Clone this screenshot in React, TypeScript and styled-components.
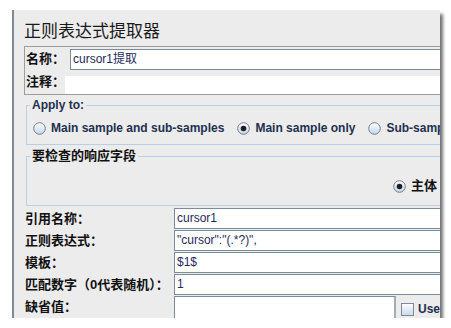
import styled, { createGlobalStyle } from 'styled-components';

const GlobalStyle = createGlobalStyle`
  html, body {
    margin: 0;
    background: #ffffff;
  }
  body {
    font-family: 'Liberation Sans', 'Noto Sans CJK SC', sans-serif;
  }
`;

const CJK = `'Liberation Sans', 'Noto Sans CJK SC', sans-serif`;

const Radio = ({ checked }: { checked?: boolean }) => (
  <svg width='13' height='13' viewBox='0 0 13 13'>
    <defs>
      <linearGradient id='rfill' x1='0' y1='0' x2='0' y2='1'>
        <stop offset='0' stopColor='#ffffff' />
        <stop offset='1' stopColor='#c3d5e8' />
      </linearGradient>
    </defs>
    <circle cx='6.5' cy='6.5' r='5.8' fill='url(#rfill)' stroke='#6f7e8d' strokeWidth='1' />
    {checked && <circle cx='6.5' cy='6.5' r='2.8' fill='#1e1e1e' />}
  </svg>
);

const CheckBox = () => (
  <svg width='13' height='13' viewBox='0 0 13 13'>
    <defs>
      <linearGradient id='cfill' x1='0' y1='0' x2='0' y2='1'>
        <stop offset='0' stopColor='#ffffff' />
        <stop offset='1' stopColor='#c8d9ea' />
      </linearGradient>
    </defs>
    <rect x='0.5' y='0.5' width='12' height='12' fill='url(#cfill)' stroke='#7b8b9b' />
  </svg>
);

const App = () => {
  const fields = [
    { label: '引用名称：', value: 'cursor1' },
    { label: '正则表达式：', value: '"cursor":"(.*?)",' },
    { label: '模板：', value: '$1$' },
    { label: '匹配数字（0代表随机）：', value: '1' },
  ];

  return (
    <Page>
      <GlobalStyle />
      <Panel>
        <Inner>
          <Title>正则表达式提取器</Title>
          <NameBox>
            <NameRow>
              <BoxLabel $width={45}>名称：</BoxLabel>
              <NameInput>cursor1提取</NameInput>
            </NameRow>
            <CommentRow>
              <BoxLabel $width={40}>注释：</BoxLabel>
              <CommentInput />
            </CommentRow>
          </NameBox>

          <Group $top={3}>
            <Legend>Apply to:</Legend>
            <RadioRow $padTop={7} $padBottom={8} $padLeft={6}>
              <RadioItem>
                <Radio />
                Main sample and sub-samples
              </RadioItem>
              <RadioItem>
                <Radio checked />
                Main sample only
              </RadioItem>
              <RadioItem>
                <Radio />
                Sub-samp
              </RadioItem>
            </RadioRow>
          </Group>

          <Group $top={3}>
            <Legend $cjk>要检查的响应字段</Legend>
            <RadioRow $padTop={14} $padBottom={11} $padLeft={366}>
              <RadioItem $cjk>
                <Radio checked />
                主体
              </RadioItem>
            </RadioRow>
          </Group>

          <FieldGrid>
            {fields.map((f) => (
              <FieldRow key={f.label}>
                <FieldLabel>{f.label}</FieldLabel>
                <FieldInput>{f.value}</FieldInput>
              </FieldRow>
            ))}
            <FieldRow>
              <FieldLabel>缺省值：</FieldLabel>
              <DefaultCell>
                <DefaultInput />
                <UseEmpty>
                  <CheckBox />
                  Use
                </UseEmpty>
              </DefaultCell>
            </FieldRow>
          </FieldGrid>
        </Inner>
      </Panel>
    </Page>
  );
};

const Page = styled.div`
  padding: 10px 0 0 12px;
`;

const Panel = styled.div`
  width: 428px;
  height: 308px;
  box-sizing: border-box;
  background: #ececec;
  border-left: 2px solid #7f8b98;
  box-shadow: 3px 4px 3px rgba(0, 0, 0, 0.55);
  overflow: hidden;
`;

const Inner = styled.div`
  width: 540px;
  padding-left: 10px;
`;

const Title = styled.div`
  height: 36px;
  line-height: 40px;
  font-family: 'Noto Sans CJK SC', sans-serif;
  font-size: 17px;
  color: #1a1a1a;
`;

const NameBox = styled.div`
  border: 1px solid #9c9c9c;
`;

const NameRow = styled.div`
  display: flex;
  align-items: center;
  height: 23px;
  padding-top: 1px;
  box-sizing: border-box;
`;

const CommentRow = styled.div`
  display: flex;
  align-items: flex-end;
  height: 24px;
`;

const BoxLabel = styled.div<{ $width: number }>`
  width: ${(p) => p.$width}px;
  padding-left: 1px;
  box-sizing: border-box;
  font-family: ${CJK};
  font-weight: bold;
  font-size: 13px;
  line-height: 18px;
  color: #111;
  align-self: center;
  white-space: nowrap;
`;

const NameInput = styled.div`
  flex: 1;
  height: 21px;
  box-sizing: border-box;
  border: 1px solid #7b8b9b;
  background: #fff;
  padding-left: 2px;
  font-family: ${CJK};
  font-size: 12px;
  line-height: 19px;
  color: #1f2a5c;
`;

const CommentInput = styled.div`
  flex: 1;
  height: 18px;
  background: #fff;
`;

const Group = styled.fieldset<{ $top: number }>`
  margin: ${(p) => p.$top}px 0 0 2px;
  padding: 0;
  border: 1px solid #b8cfe6;
  min-width: 0;
`;

const Legend = styled.legend<{ $cjk?: boolean }>`
  margin-left: 3px;
  padding: 0 2px;
  font-family: ${CJK};
  font-weight: bold;
  font-size: ${(p) => (p.$cjk ? 13 : 12)}px;
  line-height: ${(p) => (p.$cjk ? 16 : 15)}px;
  color: ${(p) => (p.$cjk ? '#111' : '#22304f')};
`;

const RadioRow = styled.div<{ $padTop: number; $padBottom: number; $padLeft: number }>`
  display: flex;
  align-items: center;
  gap: 13px;
  height: 16px;
  padding: ${(p) => `${p.$padTop}px 0 ${p.$padBottom}px ${p.$padLeft}px`};
  white-space: nowrap;
`;

const RadioItem = styled.label<{ $cjk?: boolean }>`
  display: inline-flex;
  align-items: center;
  gap: 5px;
  font-family: ${CJK};
  font-weight: bold;
  font-size: ${(p) => (p.$cjk ? 13 : 12)}px;
  line-height: 16px;
  color: ${(p) => (p.$cjk ? '#111' : '#22304f')};

  svg {
    flex: none;
  }
`;

const FieldGrid = styled.div`
  margin-top: 2px;
  display: flex;
  flex-direction: column;
  gap: 1px;
`;

const FieldRow = styled.div`
  display: grid;
  grid-template-columns: 150px 1fr;
  height: 21px;
`;

const FieldLabel = styled.div`
  padding-left: 1px;
  font-family: ${CJK};
  font-weight: bold;
  font-size: 13px;
  line-height: 21px;
  color: #111;
  white-space: nowrap;
`;

const FieldInput = styled.div`
  box-sizing: border-box;
  height: 21px;
  border: 1px solid #7b8b9b;
  background: #fff;
  padding-left: 2px;
  font-size: 12px;
  line-height: 19px;
  color: #1f2a5c;
  white-space: nowrap;
`;

const DefaultCell = styled.div`
  display: flex;
  align-items: stretch;
  height: 24px;
`;

const DefaultInput = styled.div`
  width: 222px;
  box-sizing: border-box;
  border: 1px solid #7b8b9b;
  border-right: 2px solid #a4acb4;
  background: #fff;
`;

const UseEmpty = styled.label`
  display: inline-flex;
  align-items: center;
  gap: 4px;
  padding-left: 5px;
  padding-top: 2px;
  font-weight: bold;
  font-size: 12px;
  color: #22304f;
  white-space: nowrap;
`;

export default App;
